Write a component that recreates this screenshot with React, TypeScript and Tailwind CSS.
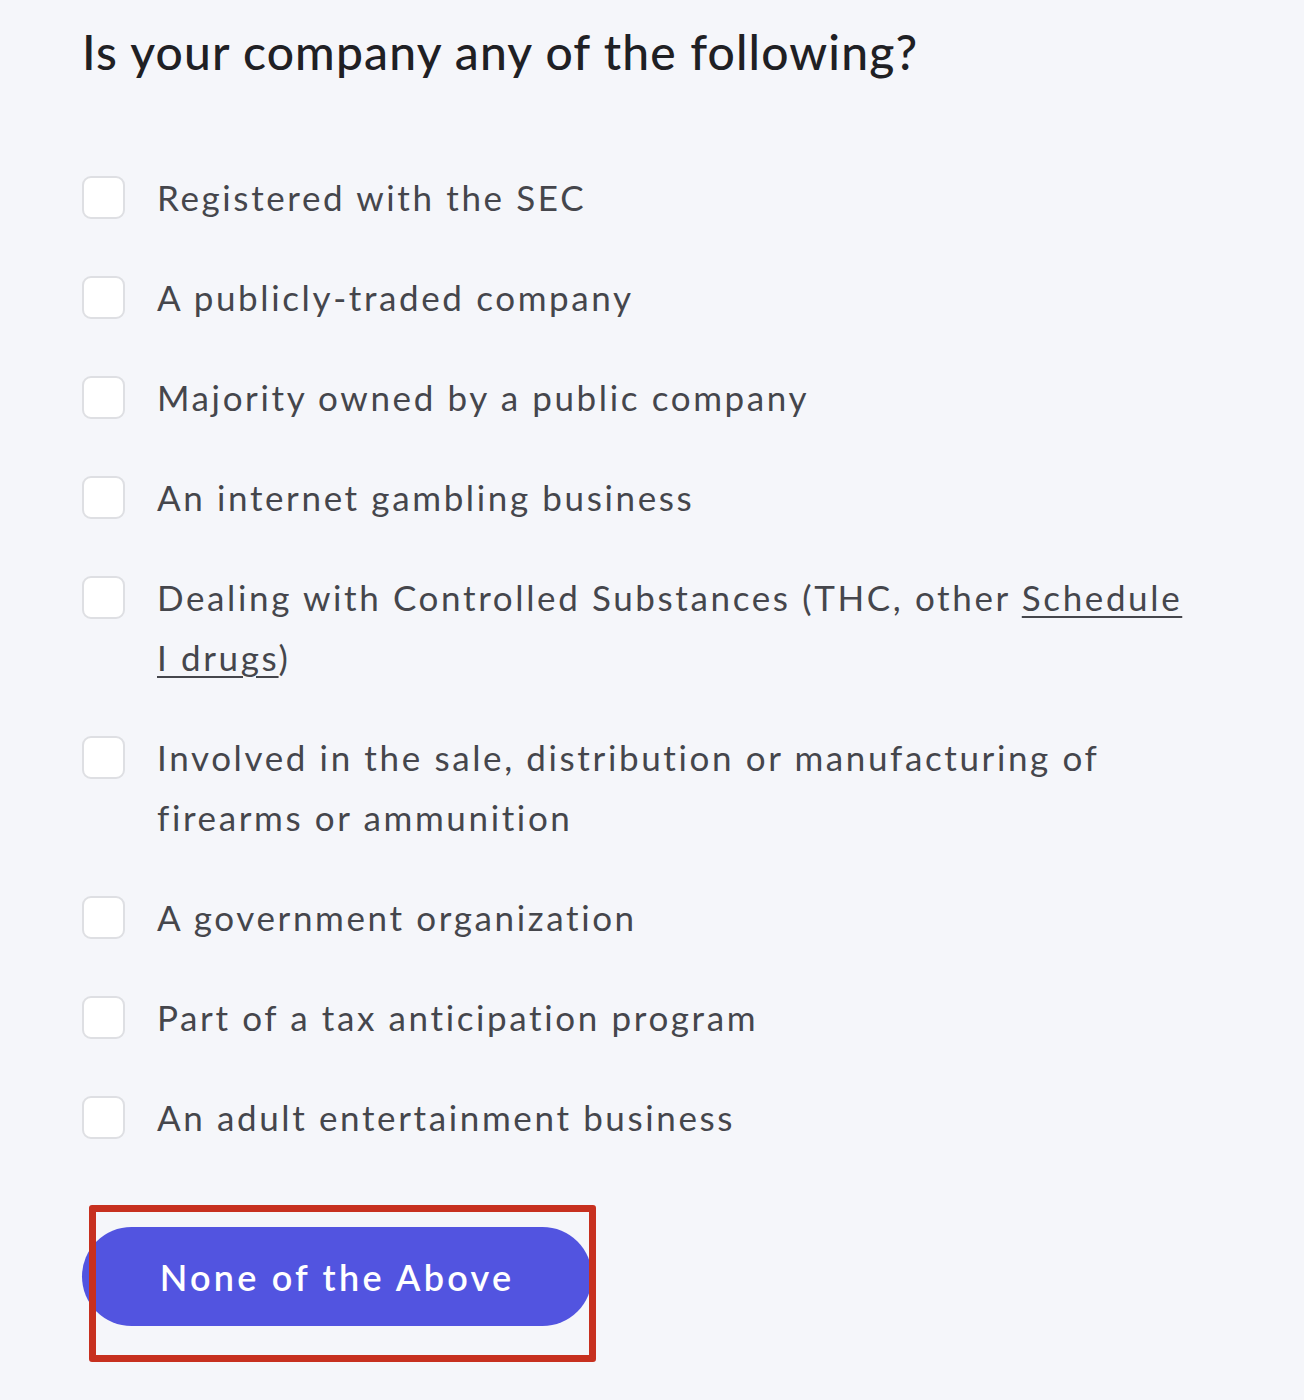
const items: { label: React.ReactNode }[] = [
  { label: 'Registered with the SEC' },
  { label: 'A publicly-traded company' },
  { label: 'Majority owned by a public company' },
  { label: 'An internet gambling business' },
  {
    label: (
      <>
        Dealing with Controlled Substances (THC, other{' '}
        <a href="#" className="underline decoration-2 underline-offset-[5px]">
          Schedule I drugs
        </a>
        )
      </>
    ),
  },
  { label: 'Involved in the sale, distribution or manufacturing of firearms or ammunition' },
  { label: 'A government organization' },
  { label: 'Part of a tax anticipation program' },
  { label: 'An adult entertainment business' },
]

function CheckRow({ label }: { label: React.ReactNode }) {
  return (
    <label className="flex items-start gap-[32px]">
      <span className="mt-[9px] h-[43px] w-[43px] shrink-0 rounded-[9px] border-2 border-[#dedfe3] bg-white" />
      <span className="max-w-[1045px] text-[35px] leading-[60px] tracking-[0.075em] text-[#45464c]">
        {label}
      </span>
    </label>
  )
}

export default function App() {
  return (
    <div
      className="min-h-[1400px] bg-[#f5f6fa] pl-[82px] pt-[24px]"
      style={{ fontFamily: 'Lato, "Noto Sans", sans-serif' }}
    >
      <h1 className="text-[48px] font-medium leading-[56px] tracking-[0.024em] text-[#1f2024]">
        Is your company any of the following?
      </h1>

      <div className="mt-[87px] flex flex-col gap-[40px]">
        {items.map((item, i) => (
          <CheckRow key={i} label={item.label} />
        ))}
      </div>

      <div className="relative mt-[80px] w-[510px]">
        <button
          type="button"
          className="flex h-[99px] w-[510px] items-center justify-center rounded-full bg-[#5254e0] text-[36px] font-semibold tracking-[0.09em] text-white"
        >
          None of the Above
        </button>
        <div className="pointer-events-none absolute left-[7px] top-[-22px] h-[157px] w-[507px] rounded-[3px] border-[7px] border-[#c7301f]" />
      </div>
    </div>
  )
}
